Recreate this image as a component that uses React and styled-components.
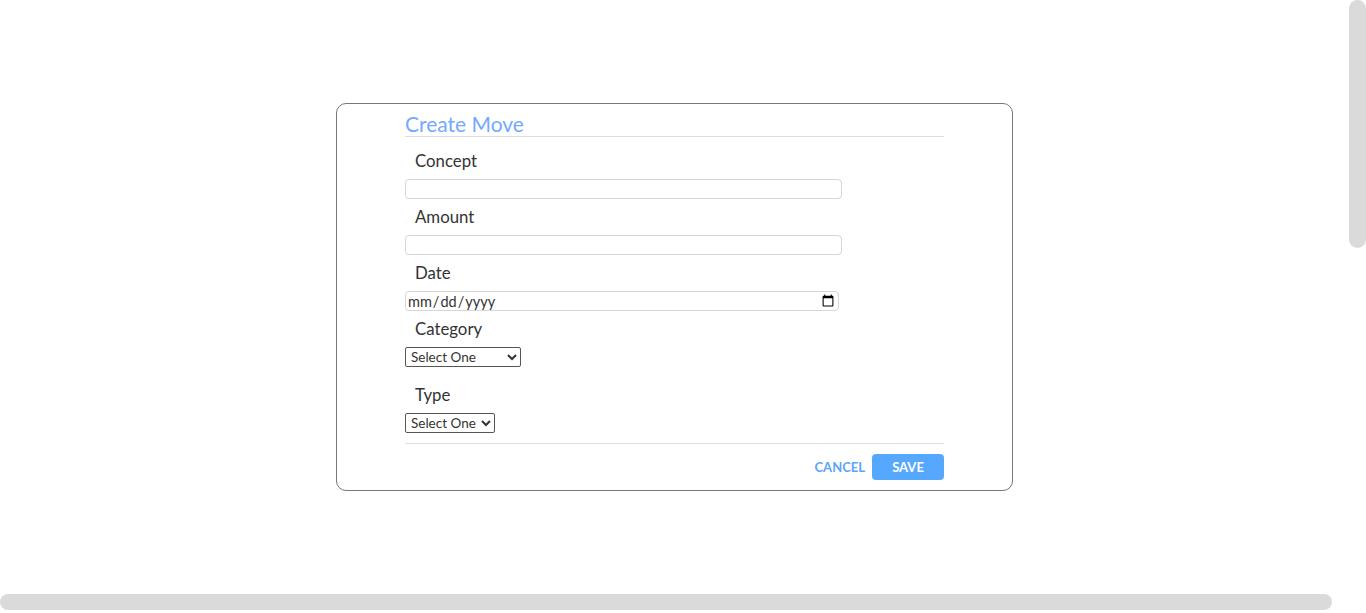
import styled, { createGlobalStyle } from 'styled-components';

const GlobalStyle = createGlobalStyle`
  body {
    margin: 0;
    background: #fff;
    font-family: Lato, "Noto Sans", sans-serif;
    color: #333;
    overflow: hidden;
  }
`;

const Page = styled.div`
  height: 613px;
  padding: 103px 17px 0 0;
  box-sizing: border-box;
`;

// the page's styled scrollbars, drawn over the content
const ScrollThumb = styled.div`
  position: fixed;
  background: #dadada;
  border-radius: 9px;
  ${props =>
    props.$vertical
      ? 'top: 0; right: 0; width: 17px; height: 248px;'
      : 'left: 0; top: 594px; width: 1332px; height: 16px;'}
`;

const Card = styled.form`
  width: 677px;
  margin: 0 auto;
  box-sizing: border-box;
  border: 1px solid #777;
  border-radius: 10px;
  padding: 8px 68px 10px 68px;
  display: flex;
  flex-direction: column;
`;

const Title = styled.h2`
  margin: 0 0 6px;
  font-size: 21px;
  line-height: 24px;
  font-weight: 400;
  color: #74a9ff;
  border-bottom: 1px solid #ddd;
`;

const Field = styled.div`
  display: flex;
  flex-direction: column;
  align-items: flex-start;
  gap: 8px;
  margin-top: ${props => props.$top || 8}px;
`;

const Label = styled.label`
  padding-left: 10px;
  font-size: 16.8px;
  line-height: 20px;
  color: #333;
`;

const TextInput = styled.input`
  width: ${props => props.$width}px;
  height: 20px;
  box-sizing: border-box;
  border: 1px solid #d6d6d6;
  border-radius: 4px;
  padding: 0 1px;
  font-family: Lato, sans-serif;
  font-size: 14.5px;
  color: #333;
  outline: none;
`;

const Select = styled.select`
  width: ${props => props.$width}px;
  height: 20px;
  box-sizing: border-box;
  border: 1px solid #555;
  border-radius: 2px;
  background: #fff;
  font-family: Lato, sans-serif;
  font-size: 13.5px;
  color: #333;
  padding: 0 1px;
`;

const Footer = styled.div`
  display: flex;
  justify-content: flex-end;
  align-items: center;
  gap: 7px;
  margin-top: 10px;
  padding-top: 10px;
  border-top: 1px solid #ddd;
`;

const Button = styled.button`
  height: 26px;
  border: none;
  border-radius: 4px;
  padding: 0;
  font-family: Lato, sans-serif;
  font-weight: 700;
  font-size: 13px;
  cursor: pointer;
  background: ${props => (props.$primary ? '#55a8fd' : 'transparent')};
  color: ${props => (props.$primary ? '#fff' : '#5ea4f7')};
  width: ${props => (props.$primary ? '72px' : 'auto')};
`;

const App = () => {
  return (
    <>
      <GlobalStyle />
      <Page>
        <Card onSubmit={e => e.preventDefault()}>
          <Title>Create Move</Title>
          <Field>
            <Label>Concept</Label>
            <TextInput type="text" $width={437} />
          </Field>
          <Field>
            <Label>Amount</Label>
            <TextInput type="text" $width={437} />
          </Field>
          <Field>
            <Label>Date</Label>
            <TextInput type="date" $width={434} />
          </Field>
          <Field>
            <Label>Category</Label>
            <Select $width={116} defaultValue="">
              <option value="">Select One</option>
            </Select>
          </Field>
          <Field $top={18}>
            <Label>Type</Label>
            <Select $width={90} defaultValue="">
              <option value="">Select One</option>
            </Select>
          </Field>
          <Footer>
            <Button type="button">CANCEL</Button>
            <Button type="submit" $primary>SAVE</Button>
          </Footer>
        </Card>
      </Page>
      <ScrollThumb $vertical />
      <ScrollThumb />
    </>
  );
};

export default App;
